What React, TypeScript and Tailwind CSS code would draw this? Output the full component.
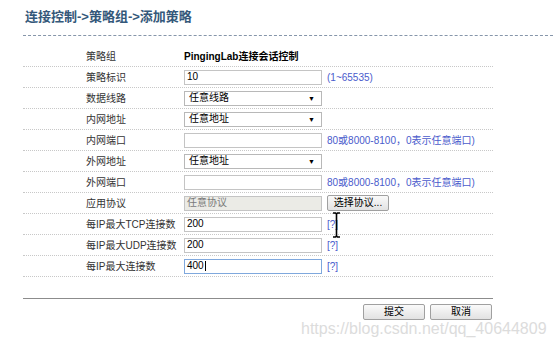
import { ReactNode } from "react";

const font = { fontFamily: '"Liberation Sans", "Noto Sans CJK SC", sans-serif' };

function Row({ label, children }: { label: string; children?: ReactNode }) {
  return (
    <div className="flex h-[21px] items-center border-b border-dotted border-[#c8c8c8]">
      <div className="w-[161px] pl-[63px] text-[10px] text-[#333]">{label}</div>
      <div className="flex flex-1 items-center">{children}</div>
    </div>
  );
}

function TextBox({ value = "", focus = false, disabled = false }: { value?: string; focus?: boolean; disabled?: boolean }) {
  return (
    <div
      className={`flex h-[15px] w-[138px] items-center border pl-[2px] text-[10px] leading-none ${
        focus
          ? "border-[#7fa8dd] text-black"
          : disabled
          ? "border-[#c4c4c4] bg-[#ebebe6] text-[#7a7a7a]"
          : "border-[#c4c4c4] bg-white text-black"
      }`}
    >
      {value}
      {focus && <span className="ml-[1px] h-[10px] w-px bg-black"></span>}
    </div>
  );
}

function Select({ value }: { value: string }) {
  return (
    <div className="flex h-[15px] w-[138px] items-center justify-between border border-[#b8b8b8] bg-white pl-[4px] pr-[6px] text-[10px] leading-none text-black">
      <span>{value}</span>
      <span className="text-[7px]">▼</span>
    </div>
  );
}

function Hint({ children }: { children: ReactNode }) {
  return <span className="ml-[5px] text-[10px] text-[#4a5bcc]">{children}</span>;
}

function Button({ children, w = "w-[62px]" }: { children: ReactNode; w?: string }) {
  return (
    <div
      className={`flex h-[16px] ${w} items-center justify-center rounded-[2px] border border-[#a0a0a0] bg-gradient-to-b from-[#fafafa] to-[#e2e2e2] text-[10px] leading-none text-black`}
    >
      {children}
    </div>
  );
}

export default function App() {
  return (
    <div className="relative h-[345px] w-[553px] overflow-hidden bg-white" style={font}>
      <div className="pl-[23px]">
        {/* title */}
        <div className="flex h-[36px] items-center border-b border-dashed border-[#8696aa] pb-[1px] pl-[2px]">
          <span className="text-[13px] font-bold text-[#34587a]">连接控制-&gt;策略组-&gt;添加策略</span>
        </div>

        <div className="mt-[10px] w-[470px]">
          <div className="flex h-[21px] items-center border-b border-dotted border-[#c8c8c8]">
            <div className="w-[161px] pl-[63px] text-[10px] text-[#333]">策略组</div>
            <div className="text-[10px] font-bold text-black">PingingLab连接会话控制</div>
          </div>
          <Row label="策略标识">
            <TextBox value="10" />
            <Hint>(1~65535)</Hint>
          </Row>
          <Row label="数据线路">
            <Select value="任意线路" />
          </Row>
          <Row label="内网地址">
            <Select value="任意地址" />
          </Row>
          <Row label="内网端口">
            <TextBox />
            <Hint>80或8000-8100，0表示任意端口)</Hint>
          </Row>
          <Row label="外网地址">
            <Select value="任意地址" />
          </Row>
          <Row label="外网端口">
            <TextBox />
            <Hint>80或8000-8100，0表示任意端口)</Hint>
          </Row>
          <Row label="应用协议">
            <TextBox value="任意协议" disabled />
            <div className="ml-[5px]">
              <Button>选择协议...</Button>
            </div>
          </Row>
          <Row label="每IP最大TCP连接数">
            <TextBox value="200" />
            <Hint>[?]</Hint>
          </Row>
          <Row label="每IP最大UDP连接数">
            <TextBox value="200" />
            <Hint>[?]</Hint>
          </Row>
          <Row label="每IP最大连接数">
            <TextBox value="400" focus />
            <Hint>[?]</Hint>
          </Row>

          <div className="mt-[21px] border-t border-[#8c8c8c]"></div>
          <div className="mt-[5px] flex justify-end gap-[5px] pr-[1px]">
            <Button>提交</Button>
            <Button>取消</Button>
          </div>
        </div>
      </div>

      {/* mouse text cursor */}
      <svg className="absolute left-[332px] top-[212px]" width="9" height="26" viewBox="0 0 9 26">
        <path d="M1 1h2.5l1 1 1-1H8M4.5 2v22M1 25h2.5l1-1 1 1H8" fill="none" stroke="#000" strokeWidth="1.6" />
      </svg>

      {/* watermark */}
      <div className="absolute left-[301px] top-[317px] text-[16px] text-[#dcdcdc]">https://blog.csdn.net/qq_40644809</div>
    </div>
  );
}
